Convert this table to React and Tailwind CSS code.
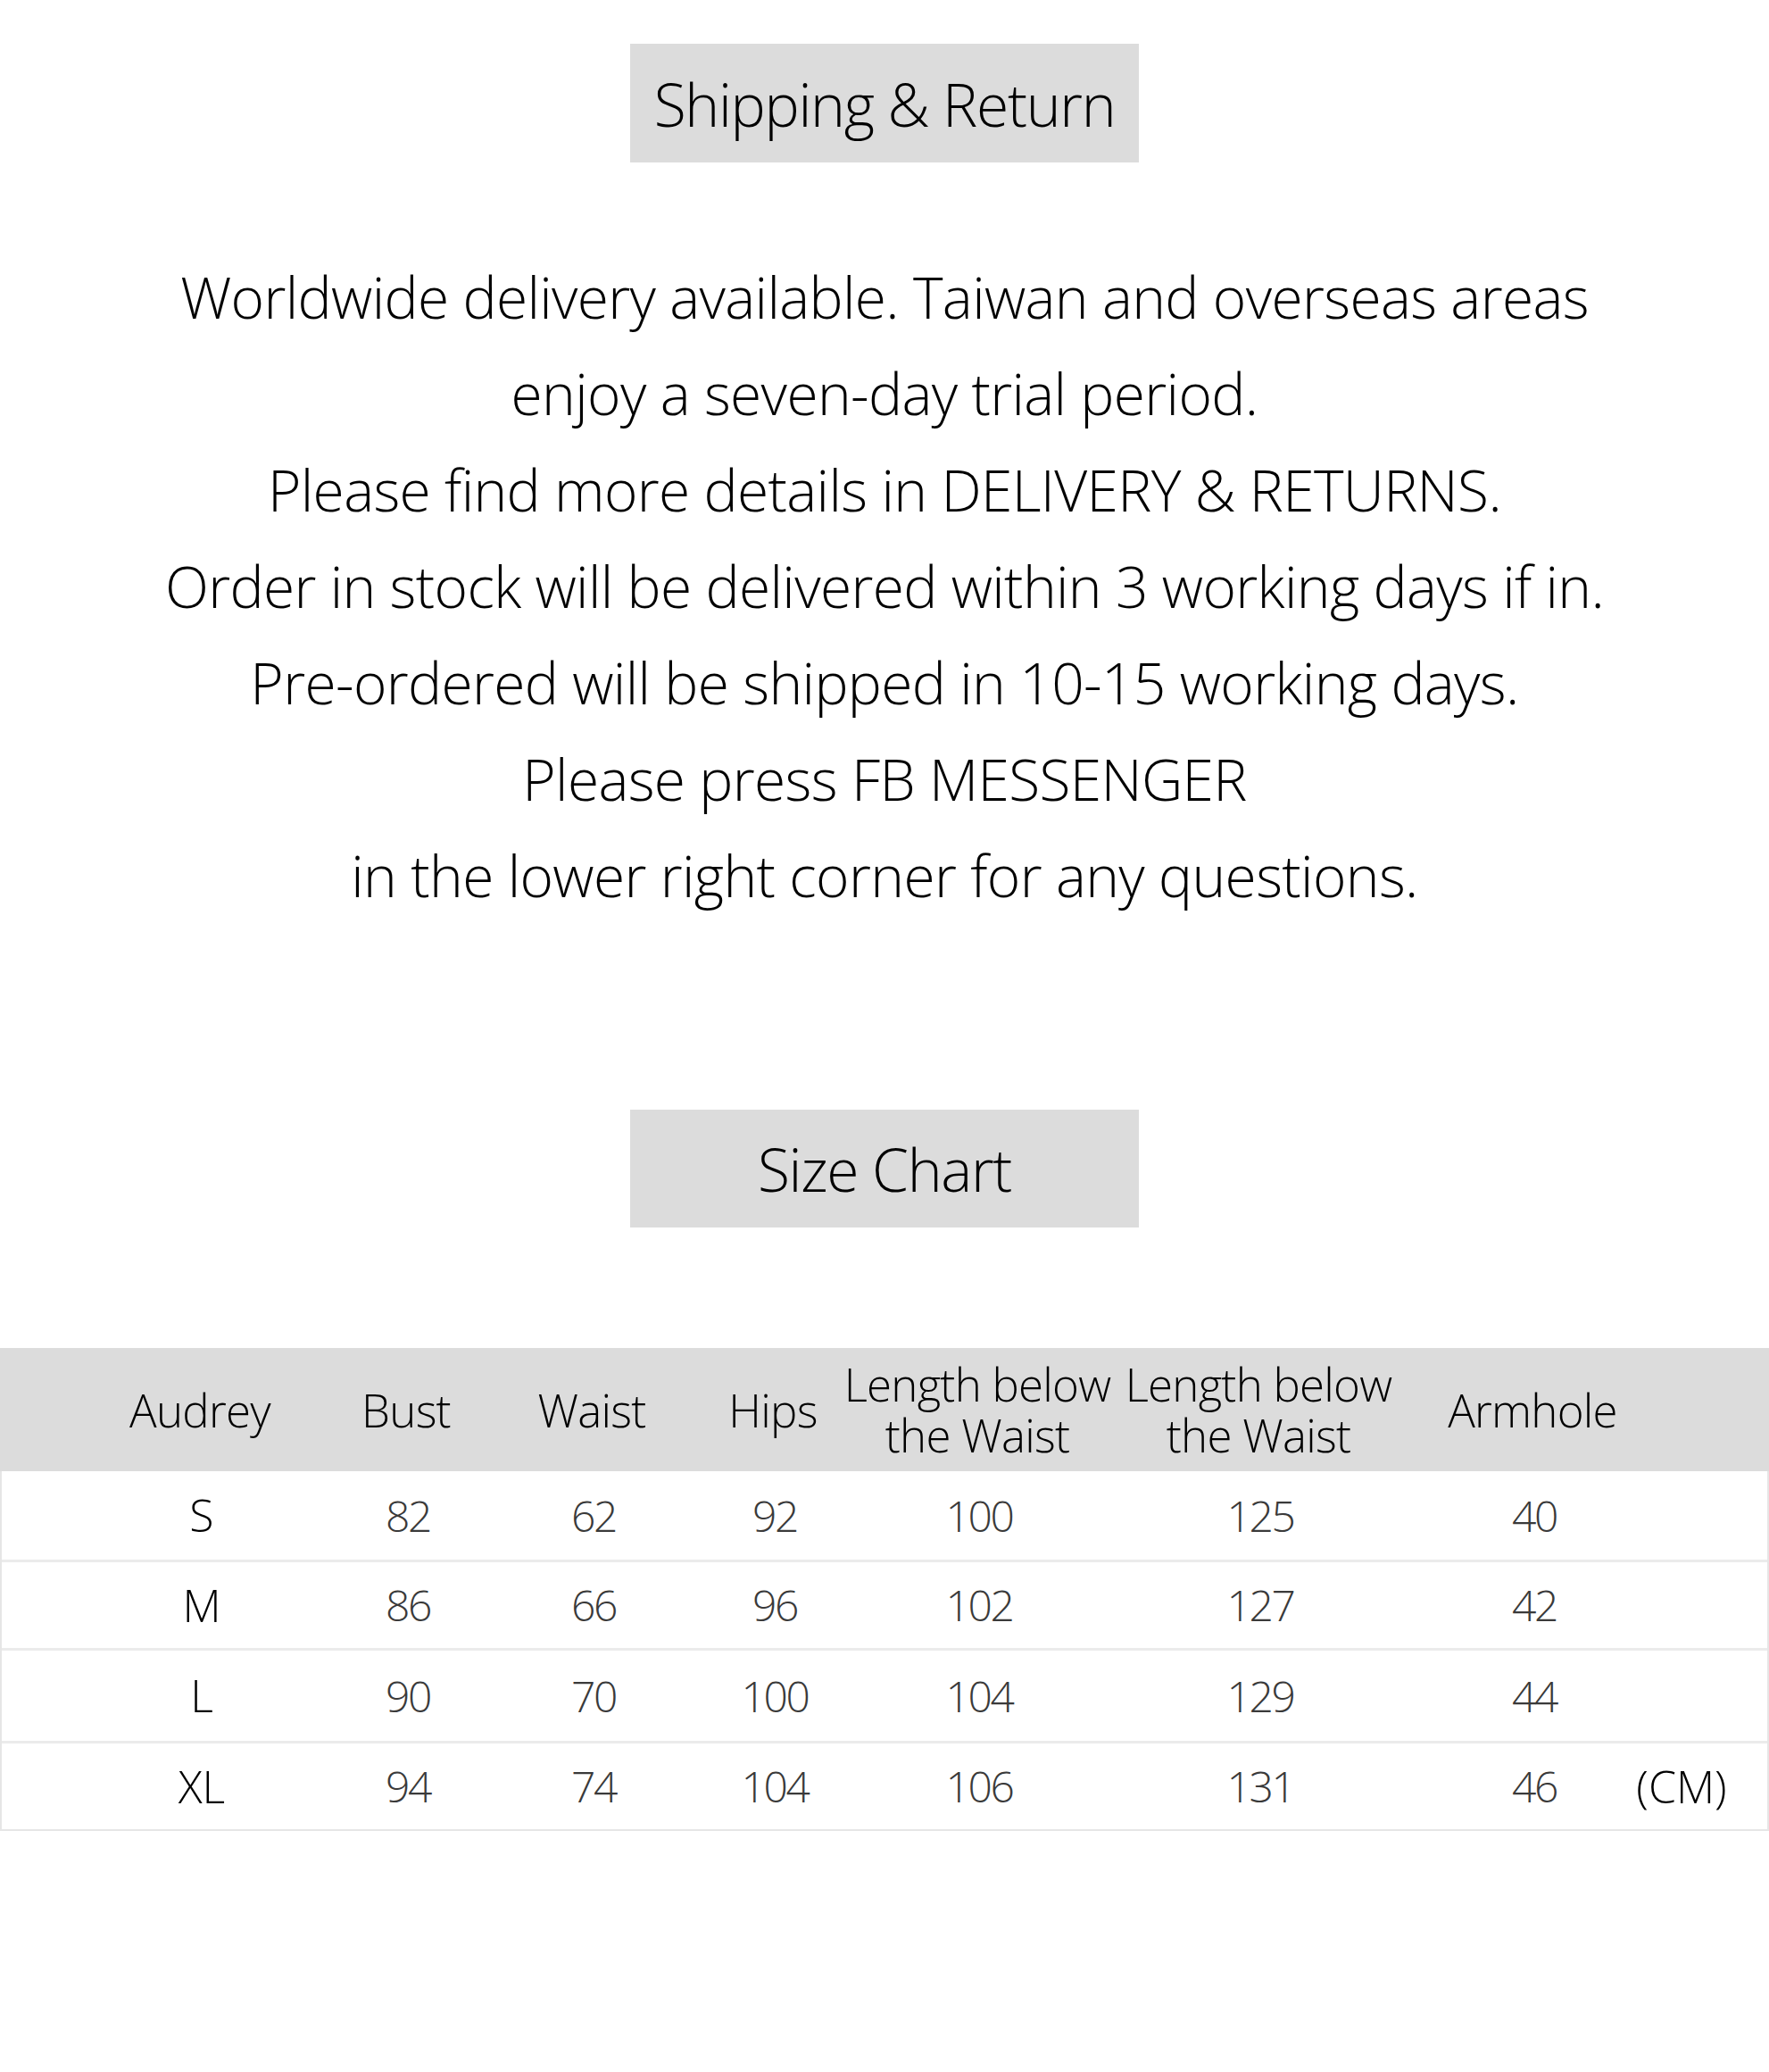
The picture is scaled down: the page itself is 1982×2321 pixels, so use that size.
const lines = [
  "Worldwide delivery available. Taiwan and overseas areas",
  "enjoy a seven-day trial period.",
  "Please find more details in DELIVERY & RETURNS.",
  "Order in stock will be delivered within 3 working days if in.",
  "Pre-ordered will be shipped in 10-15 working days.",
  "Please press FB MESSENGER",
  "in the lower right corner for any questions.",
];

const rows = [
  { size: "S", vals: ["82", "62", "92", "100", "125", "40"], h: "h-[99px]" },
  { size: "M", vals: ["86", "66", "96", "102", "127", "42"], h: "h-[99px]" },
  { size: "L", vals: ["90", "70", "100", "104", "129", "44"], h: "h-[104px]" },
  { size: "XL", vals: ["94", "74", "104", "106", "131", "46"], h: "h-[99px]", unit: "(CM)" },
];

const cols = "grid grid-cols-[308px_154px_262px_144px_314px_316px_298px_32px] pl-[70px]";

function Cell({ children, className = "" }) {
  return (
    <div className={`flex flex-col items-center justify-center text-center whitespace-nowrap ${className}`}>
      {children}
    </div>
  );
}

export default function App() {
  return (
    <div className="w-[1982px] min-h-[2321px] bg-white text-black font-['Open_Sans',sans-serif] font-light">
      {/* Shipping */}
      <div className="pt-[49px] flex justify-center">
        <div className="w-[570px] h-[133px] bg-[#dcdcdc] flex items-center justify-center text-[66px] tracking-[-0.02em] leading-none">
          Shipping &amp; Return
        </div>
      </div>

      <div className="mt-[97px] text-center text-[64px] tracking-[-0.01em] leading-[108px]">
        {lines.map((l, i) => (
          <p key={i}>{l}</p>
        ))}
      </div>

      {/* Size chart */}
      <div className="mt-[208px] flex justify-center">
        <div className="w-[570px] h-[132px] bg-[#dcdcdc] flex items-center justify-center text-[66px] tracking-[-0.02em] leading-none">
          Size Chart
        </div>
      </div>

      <div className="mt-[135px] border-2 border-t-0 border-[#e6e6e6]">
        <div className={`${cols} h-[138px] bg-[#dcdcdc] text-[51px] tracking-[-0.015em] leading-[57px] -mx-[2px]`}>
          <Cell>Audrey</Cell>
          <Cell>Bust</Cell>
          <Cell>Waist</Cell>
          <Cell>Hips</Cell>
          <Cell>
            <span>Length below<br />the Waist</span>
          </Cell>
          <Cell>
            <span>Length below<br />the Waist</span>
          </Cell>
          <Cell>Armhole</Cell>
          <Cell />
        </div>
        {rows.map((r, i) => (
          <div
            key={r.size}
            className={`${cols} ${r.h} text-[48px] ${i > 0 ? "border-t-[3px] border-[#ebebeb]" : ""}`}
          >
            <Cell className="text-black text-[50px]">{r.size}</Cell>
            {r.vals.map((v, j) => (
              <Cell key={j} className="text-[#3a3a3a] tracking-[-0.05em]">{v}</Cell>
            ))}
            <Cell className="text-black text-[50px]">{r.unit}</Cell>
          </div>
        ))}
      </div>
    </div>
  );
}
